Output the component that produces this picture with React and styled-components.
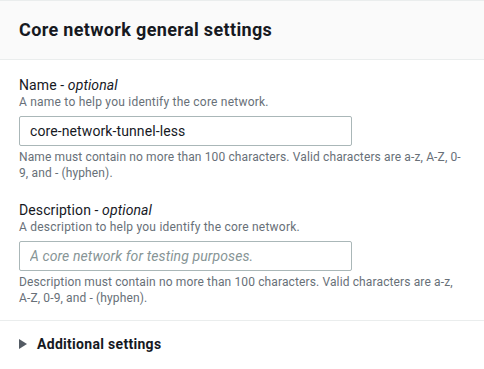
import React from "react";
import styled, { createGlobalStyle } from "styled-components";

const GlobalStyle = createGlobalStyle`
  body {
    margin: 0;
    background: #ffffff;
    font-family: Roboto, "Liberation Sans", sans-serif;
    color: #16191f;
  }
`;

const Panel = styled.section`
  width: 484px;
  background: #ffffff;
  border-top: 1px solid #eaeded;
`;

const Header = styled.header`
  background: #fafafa;
  padding: 18px 19px;
  border-bottom: 1px solid #eaeded;
`;

const Title = styled.h2`
  margin: 0;
  font-size: 18px;
  line-height: 22px;
  font-weight: 700;
  letter-spacing: 0.35px;
  color: #16191f;
`;

const Body = styled.div`
  padding: 16px 19px 14px;
  display: flex;
  flex-direction: column;
  gap: 20px;
  border-bottom: 1px solid #eaeded;
`;

const Field = styled.div`
  display: flex;
  flex-direction: column;
`;

const Label = styled.label`
  font-size: 14px;
  line-height: 18px;
  color: #16191f;
  letter-spacing: 0.1px;

  em {
    font-style: italic;
  }
`;

const Description = styled.div`
  font-size: 12px;
  line-height: 16px;
  color: #687078;
  letter-spacing: 0.22px;
`;

const Input = styled.input`
  box-sizing: border-box;
  width: 333px;
  height: 30px;
  margin: 6px 0 4px;
  padding: 0 10px;
  border: 1px solid #aab7b8;
  border-radius: 2px;
  background: #ffffff;
  font-family: inherit;
  font-size: 14px;
  letter-spacing: 0.1px;
  color: #16191f;
  outline: none;

  &::placeholder {
    color: #879596;
    font-style: italic;
  }
`;

const Hint = styled.div`
  font-size: 12px;
  line-height: 15.5px;
  color: #687078;
  letter-spacing: 0.13px;
  width: 446px;
`;

const Expander = styled.button`
  display: flex;
  align-items: center;
  gap: 10px;
  padding: 13px 19px;
  border: none;
  background: none;
  font-family: inherit;
  font-size: 14px;
  line-height: 20px;
  font-weight: 700;
  letter-spacing: 0.3px;
  color: #16191f;
  cursor: pointer;
`;

const Caret = styled.svg`
  width: 8px;
  height: 10px;
  fill: #545b64;
  flex-shrink: 0;
`;

const fields = [
  {
    id: "name",
    label: "Name",
    description: "A name to help you identify the core network.",
    value: "core-network-tunnel-less",
    placeholder: "",
    hint: "Name must contain no more than 100 characters. Valid characters are a-z, A-Z, 0-9, and - (hyphen).",
  },
  {
    id: "description",
    label: "Description",
    description: "A description to help you identify the core network.",
    value: "",
    placeholder: "A core network for testing purposes.",
    hint: "Description must contain no more than 100 characters. Valid characters are a-z, A-Z, 0-9, and - (hyphen).",
  },
];

export default function App() {
  return (
    <>
      <GlobalStyle />
      <Panel>
        <Header>
          <Title>Core network general settings</Title>
        </Header>
        <Body>
          {fields.map((f) => (
            <Field key={f.id}>
              <Label htmlFor={f.id}>
                {f.label} - <em>optional</em>
              </Label>
              <Description>{f.description}</Description>
              <Input
                id={f.id}
                defaultValue={f.value}
                placeholder={f.placeholder}
              />
              <Hint>{f.hint}</Hint>
            </Field>
          ))}
        </Body>
        <Expander type="button">
          <Caret viewBox="0 0 8 10">
            <path d="M0 0 L8 5 L0 10 Z" />
          </Caret>
          Additional settings
        </Expander>
      </Panel>
    </>
  );
}
